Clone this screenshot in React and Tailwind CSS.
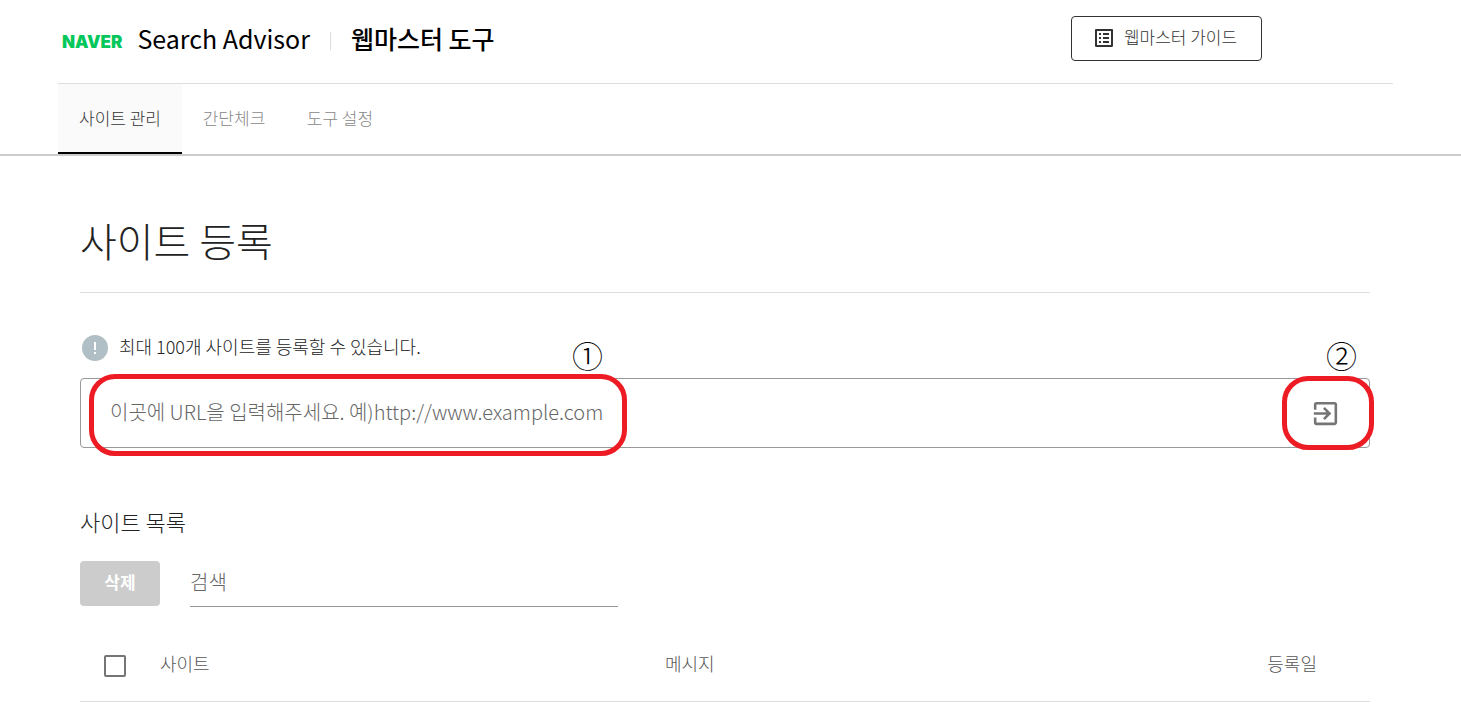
import { useState } from "react";
import { MdExitToApp, MdListAlt } from "react-icons/md";

/* ── TABS ── */
const tabs = [
  { id: "sites", label: "사이트 관리", width: "w-[124px]" },
  { id: "check", label: "간단체크", width: "w-[104px]" },
  { id: "tools", label: "도구 설정", width: "w-[108px]" },
];

function Header() {
  return (
    <header className="flex h-[83px] items-start pl-1">
      <a href="#" className="flex h-[76px] items-center text-black">
        <span className="mt-2 font-['Inter'] text-[17px] font-black leading-6 text-[#03c75a]">
          NAVER
        </span>
        <span className="ml-[15px] text-[25px] font-normal leading-8">Search Advisor</span>
      </a>
      <span className="ml-5 mt-8 h-[18px] w-px bg-[#ddd]" />
      <a href="#" className="ml-5 flex h-[76px] items-center text-[25px] font-medium leading-8 text-black">
        웹마스터 도구
      </a>

      <button
        type="button"
        className="ml-auto mr-[131px] mt-4 flex h-[45px] w-[191px] items-center justify-center gap-2 rounded border border-[#333] pr-1 text-[#333]"
      >
        <MdListAlt size={24} className="mb-0.5" />
        <span className="pb-1 text-[17px] leading-6">웹마스터 가이드</span>
      </button>
    </header>
  );
}

function TabBar({ active, onChange }) {
  return (
    <nav className="flex h-[71px] border-t border-[#ddd]">
      {tabs.map((tab) => (
        <button
          key={tab.id}
          type="button"
          onClick={() => onChange(tab.id)}
          className={`border-b-2 text-[17px] leading-6 ${tab.width} ${
            active === tab.id
              ? "border-black bg-[#fafafa] text-[#333]"
              : "border-transparent text-[#888]"
          }`}
        >
          {tab.label}
        </button>
      ))}
    </nav>
  );
}

/* ── URL FORM with the two numbered steps ── */
function SiteForm() {
  return (
    <form className="relative" onSubmit={(e) => e.preventDefault()}>
      <div className="flex h-[70px] rounded border border-[#999]">
        <input
          type="text"
          aria-label="사이트 URL"
          placeholder="이곳에 URL을 입력해주세요. 예)http://www.example.com"
          className="min-w-0 flex-1 bg-transparent pb-0.5 pl-[29px] text-[20px] outline-none placeholder:text-[#666] placeholder:opacity-100"
        />
        <button
          type="submit"
          aria-label="등록"
          className="flex w-[88px] items-center justify-center text-[#757575]"
        >
          <MdExitToApp size={31} />
        </button>
      </div>

      <span className="pointer-events-none absolute -top-1 left-[9px] h-[82px] w-[538px] rounded-[26px] border-[5px] border-[#ed1c24]" />
      <span className="absolute -top-[41px] left-[492px] text-[31px] leading-9 text-black">①</span>
      <span className="pointer-events-none absolute -right-1 -top-0.5 h-[74px] w-[92px] rounded-[26px] border-[5px] border-[#ed1c24]" />
      <span className="absolute -top-[41px] right-[13px] text-[31px] leading-9 text-black">②</span>
    </form>
  );
}

function SiteList() {
  return (
    <section>
      <h2 className="text-[22px] leading-8 text-[#222]">사이트 목록</h2>

      <div className="mt-6 flex gap-[30px]">
        <button
          type="button"
          disabled
          className="h-[45px] w-20 rounded bg-[#ccc] pb-1 text-[17px] font-bold text-white"
        >
          삭제
        </button>
        <input
          type="search"
          aria-label="검색"
          placeholder="검색"
          className="h-[46px] w-[428px] border-b border-[#949494] bg-transparent pb-1 text-[20px] outline-none placeholder:text-[#666] placeholder:opacity-100"
        />
      </div>

      <table className="mt-5 w-full table-fixed border-collapse text-[18px] leading-6 text-[#555]">
        <thead>
          <tr className="h-[74px] border-b border-[#ddd]">
            <th className="w-20 pt-1 pl-6 text-left">
              <input
                type="checkbox"
                aria-label="전체 선택"
                className="block size-[22px] appearance-none rounded-xs border-2 border-[#757575] checked:bg-[#757575]"
              />
            </th>
            <th className="pb-0.5 text-left font-light">사이트</th>
            <th className="w-[705px] pb-0.5 text-left">
              <div className="flex justify-between pr-[53px] font-light">
                <span>메시지</span>
                <span>등록일</span>
              </div>
            </th>
          </tr>
        </thead>
      </table>
    </section>
  );
}

export default function App() {
  const [active, setActive] = useState("sites");

  return (
    <div className="min-h-screen bg-white font-['Noto_Sans_CJK_KR',sans-serif] font-light">
      {/* ── TOP ── */}
      <div className="border-b-2 border-[#ccc] pl-[58px] pr-[68px]">
        <Header />
        <TabBar active={active} onChange={setActive} />
      </div>

      {/* ── CONTENT ── */}
      <main className="pl-20 pr-[91px]">
        <h1 className="border-b border-[#ddd] pb-6 pt-14 text-[40px] leading-[56px] text-[#222]">
          사이트 등록
        </h1>

        <p className="mt-10 flex h-[30px] items-center gap-[11px] pl-0.5 text-[18px] leading-6 text-[#222]">
          <span className="flex size-[26px] items-center justify-center rounded-full bg-[#b0bec5]">
            <svg viewBox="0 0 26 26" className="size-[26px]" fill="#fff" aria-hidden="true">
              <path d="M12 7h2v8h-2zM12 17h2v2h-2z" />
            </svg>
          </span>
          <span className="pb-1">최대 100개 사이트를 등록할 수 있습니다.</span>
        </p>

        <div className="mt-[15px]">
          <SiteForm />
        </div>

        <div className="mt-[57px]">
          <SiteList />
        </div>
      </main>
    </div>
  );
}
